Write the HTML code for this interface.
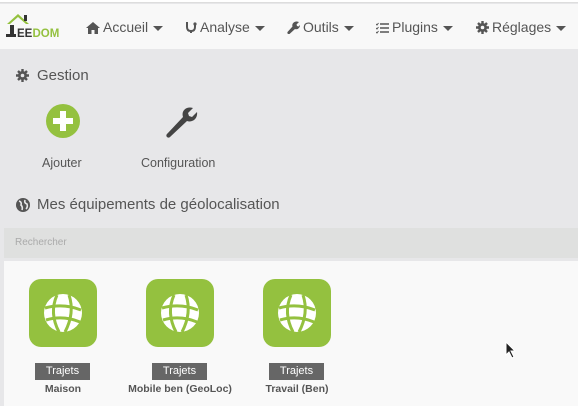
<!DOCTYPE html>
<html><head><meta charset="utf-8"><style>
*{margin:0;padding:0;box-sizing:border-box}
body{width:578px;height:406px;overflow:hidden;background:#e7e7e9;font-family:"Liberation Sans",sans-serif;position:relative;color:#555}
.top{position:absolute;left:0;top:0;width:578px;height:3px;background:#fff;border-bottom:1px solid #ddd}
.nav{position:absolute;left:0;top:4px;width:578px;height:45px;background:#f8f8f8}
.ni{position:absolute;top:15px;font-size:14px;color:#555;white-space:nowrap}
.ni svg{vertical-align:-2px;margin-right:3px}
.caret{display:inline-block;width:0;height:0;border-left:5px solid transparent;border-right:5px solid transparent;border-top:5px solid #555;vertical-align:middle;margin-left:5px}
.abs{position:absolute}
.h{font-size:15px;color:#555}
.search{position:absolute;left:4px;top:228px;width:574px;height:30px;background:#dfe0df;font-size:10px;color:#aaa;padding:9px 11px}
.panel{position:absolute;left:4px;top:261px;width:574px;height:145px;background:#f9f9f9}
.card{position:absolute;top:279px;width:68px;height:68px;background:#94c13f;border-radius:12px}
.tag{position:absolute;top:363px;height:17px;width:55px;background:#666;color:#fff;font-size:11px;text-align:center;line-height:17px}
.nm{position:absolute;top:383px;font-size:10.5px;font-weight:bold;color:#555;text-align:center;width:140px}
</style></head><body>
<div class="top"></div>
<div class="nav">
 <svg class="abs" style="left:4px;top:6px" width="64" height="30" viewBox="0 0 64 30">
  <path d="M3 14 L14 4 L25 14 L22 14 L14 7 L6 14Z" fill="#94c13f"/>
  <rect x="20" y="5" width="3" height="6" fill="#333"/>
  <rect x="6" y="15" width="4" height="12" fill="#333"/><rect x="2" y="24" width="10" height="3" fill="#333"/>
  <text x="13" y="27" font-family="Liberation Sans" font-weight="bold" font-size="11.5" fill="#333">EE</text>
  <text x="28.5" y="27" font-family="Liberation Sans" font-weight="bold" font-size="11.5" fill="#94c13f">DOM</text>
 </svg>
 <div class="ni" style="left:86px"><svg width="14" height="12" viewBox="0 0 14 12"><path d="M7 0 L14 6 L12 6 L12 12 L8.5 12 L8.5 8 L5.5 8 L5.5 12 L2 12 L2 6 L0 6Z" fill="#555"/></svg>Accueil<span class="caret"></span></div>
 <div class="ni" style="left:185px"><svg width="12" height="13" viewBox="0 0 12 13"><path d="M2 1 L2 6 Q2 10 6 10 Q10 10 10 6 L10 4" stroke="#555" stroke-width="2" fill="none"/><path d="M6 10 L6 12" stroke="#555" stroke-width="2"/><circle cx="10" cy="3" r="1.6" fill="#555"/></svg>Analyse<span class="caret"></span></div>
 <div class="ni" style="left:287px"><svg width="13" height="13" viewBox="0 0 13 13"><path d="M12 1 L9.5 3.5 L10 5 L11.5 5.5 L13 4 C13 7 10.5 9 8 8 L2.5 13 C1 13.5 0 12.5 0.5 11 L5.5 5.5 C4.5 3 7 0 10 0.5Z" fill="#555"/></svg>Outils<span class="caret"></span></div>
 <div class="ni" style="left:376px"><svg width="13" height="12" viewBox="0 0 13 12"><path d="M4 2H13M4 6H13M4 10H13" stroke="#555" stroke-width="1.5"/><path d="M0 2L1 3L2.5 1M0 6L1 7L2.5 5M0 10L1 11L2.5 9" stroke="#555" stroke-width="1" fill="none"/></svg>Plugins<span class="caret"></span></div>
 <div class="ni" style="left:476px"><svg width="13" height="13" viewBox="0 0 13 13"><circle cx="6.5" cy="6.5" r="4.5" fill="#555"/><path d="M6.5 0V13M0 6.5H13M2 2L11 11M11 2L2 11" stroke="#555" stroke-width="2.4"/><circle cx="6.5" cy="6.5" r="1.8" fill="#f8f8f8"/></svg>Réglages<span class="caret"></span></div>
</div>
<svg class="abs" style="left:16px;top:69px" width="13" height="13" viewBox="0 0 13 13"><circle cx="6.5" cy="6.5" r="4.5" fill="#555"/><path d="M6.5 0V13M0 6.5H13M2 2L11 11M11 2L2 11" stroke="#555" stroke-width="2.4"/><circle cx="6.5" cy="6.5" r="1.8" fill="#e7e7e9"/></svg>
<div class="abs h" style="left:37px;top:67px">Gestion</div>
<svg class="abs" style="left:46px;top:104px" width="34" height="34"><circle cx="17" cy="17" r="17" fill="#94c13f"/><rect x="14" y="7" width="6" height="20" fill="#fff"/><rect x="7" y="14" width="20" height="6" fill="#fff"/></svg>
<div class="abs" style="left:42px;top:156px;font-size:12.5px;color:#555">Ajouter</div>
<svg class="abs" style="left:162px;top:102px" width="38" height="38" viewBox="0 0 38 38"><path d="M31 6 L26 11 L27 14 L30 15 L35 10 C36 16 31 21 25 19 L8 35 C6 37 3 34 5 32 L21 15 C19 9 24 4 31 6Z" fill="#444"/></svg>
<div class="abs" style="left:141px;top:156px;font-size:12.5px;color:#555">Configuration</div>
<svg class="abs" style="left:16px;top:198px" width="14" height="14" viewBox="0 0 14 14"><circle cx="7" cy="7" r="7" fill="#555"/><path d="M3 3 Q6 4 5 7 Q7 9 6 12 M9 2 Q8 5 11 6 Q12 9 10 11" stroke="#e7e7e9" stroke-width="1.6" fill="none"/></svg>
<div class="abs h" style="left:37px;top:196px">Mes équipements de géolocalisation</div>
<div class="search">Rechercher</div>
<div class="panel"></div>
<div class="card" style="left:29px"></div>
<div class="card" style="left:146px"></div>
<div class="card" style="left:263px"></div>
<svg width="0" height="0" style="position:absolute"><defs><g id="g"><circle cx="20" cy="20" r="19" fill="#fff"/><path d="M2 15 Q20 10 38 17 M3 27 Q20 22 37 29 M14 2 Q6 20 16 39 M26 2 Q32 20 22 39" stroke="#94c13f" stroke-width="3" fill="none"/></g></defs></svg>
<svg class="abs" style="left:43px;top:293px" width="40" height="40"><use href="#g"/></svg>
<svg class="abs" style="left:160px;top:293px" width="40" height="40"><use href="#g"/></svg>
<svg class="abs" style="left:277px;top:293px" width="40" height="40"><use href="#g"/></svg>
<div class="tag" style="left:35px">Trajets</div>
<div class="tag" style="left:152px">Trajets</div>
<div class="tag" style="left:269px">Trajets</div>
<div class="nm" style="left:-7px">Maison</div>
<div class="nm" style="left:110px">Mobile ben (GeoLoc)</div>
<div class="nm" style="left:227px">Travail (Ben)</div>
<svg class="abs" style="left:505px;top:341px" width="12" height="18"><path d="M1 1 L1 14 L4 11 L7 17 L9 16 L6 10 L10 10Z" fill="#222" stroke="#fff" stroke-width="1"/></svg>
</body></html>
